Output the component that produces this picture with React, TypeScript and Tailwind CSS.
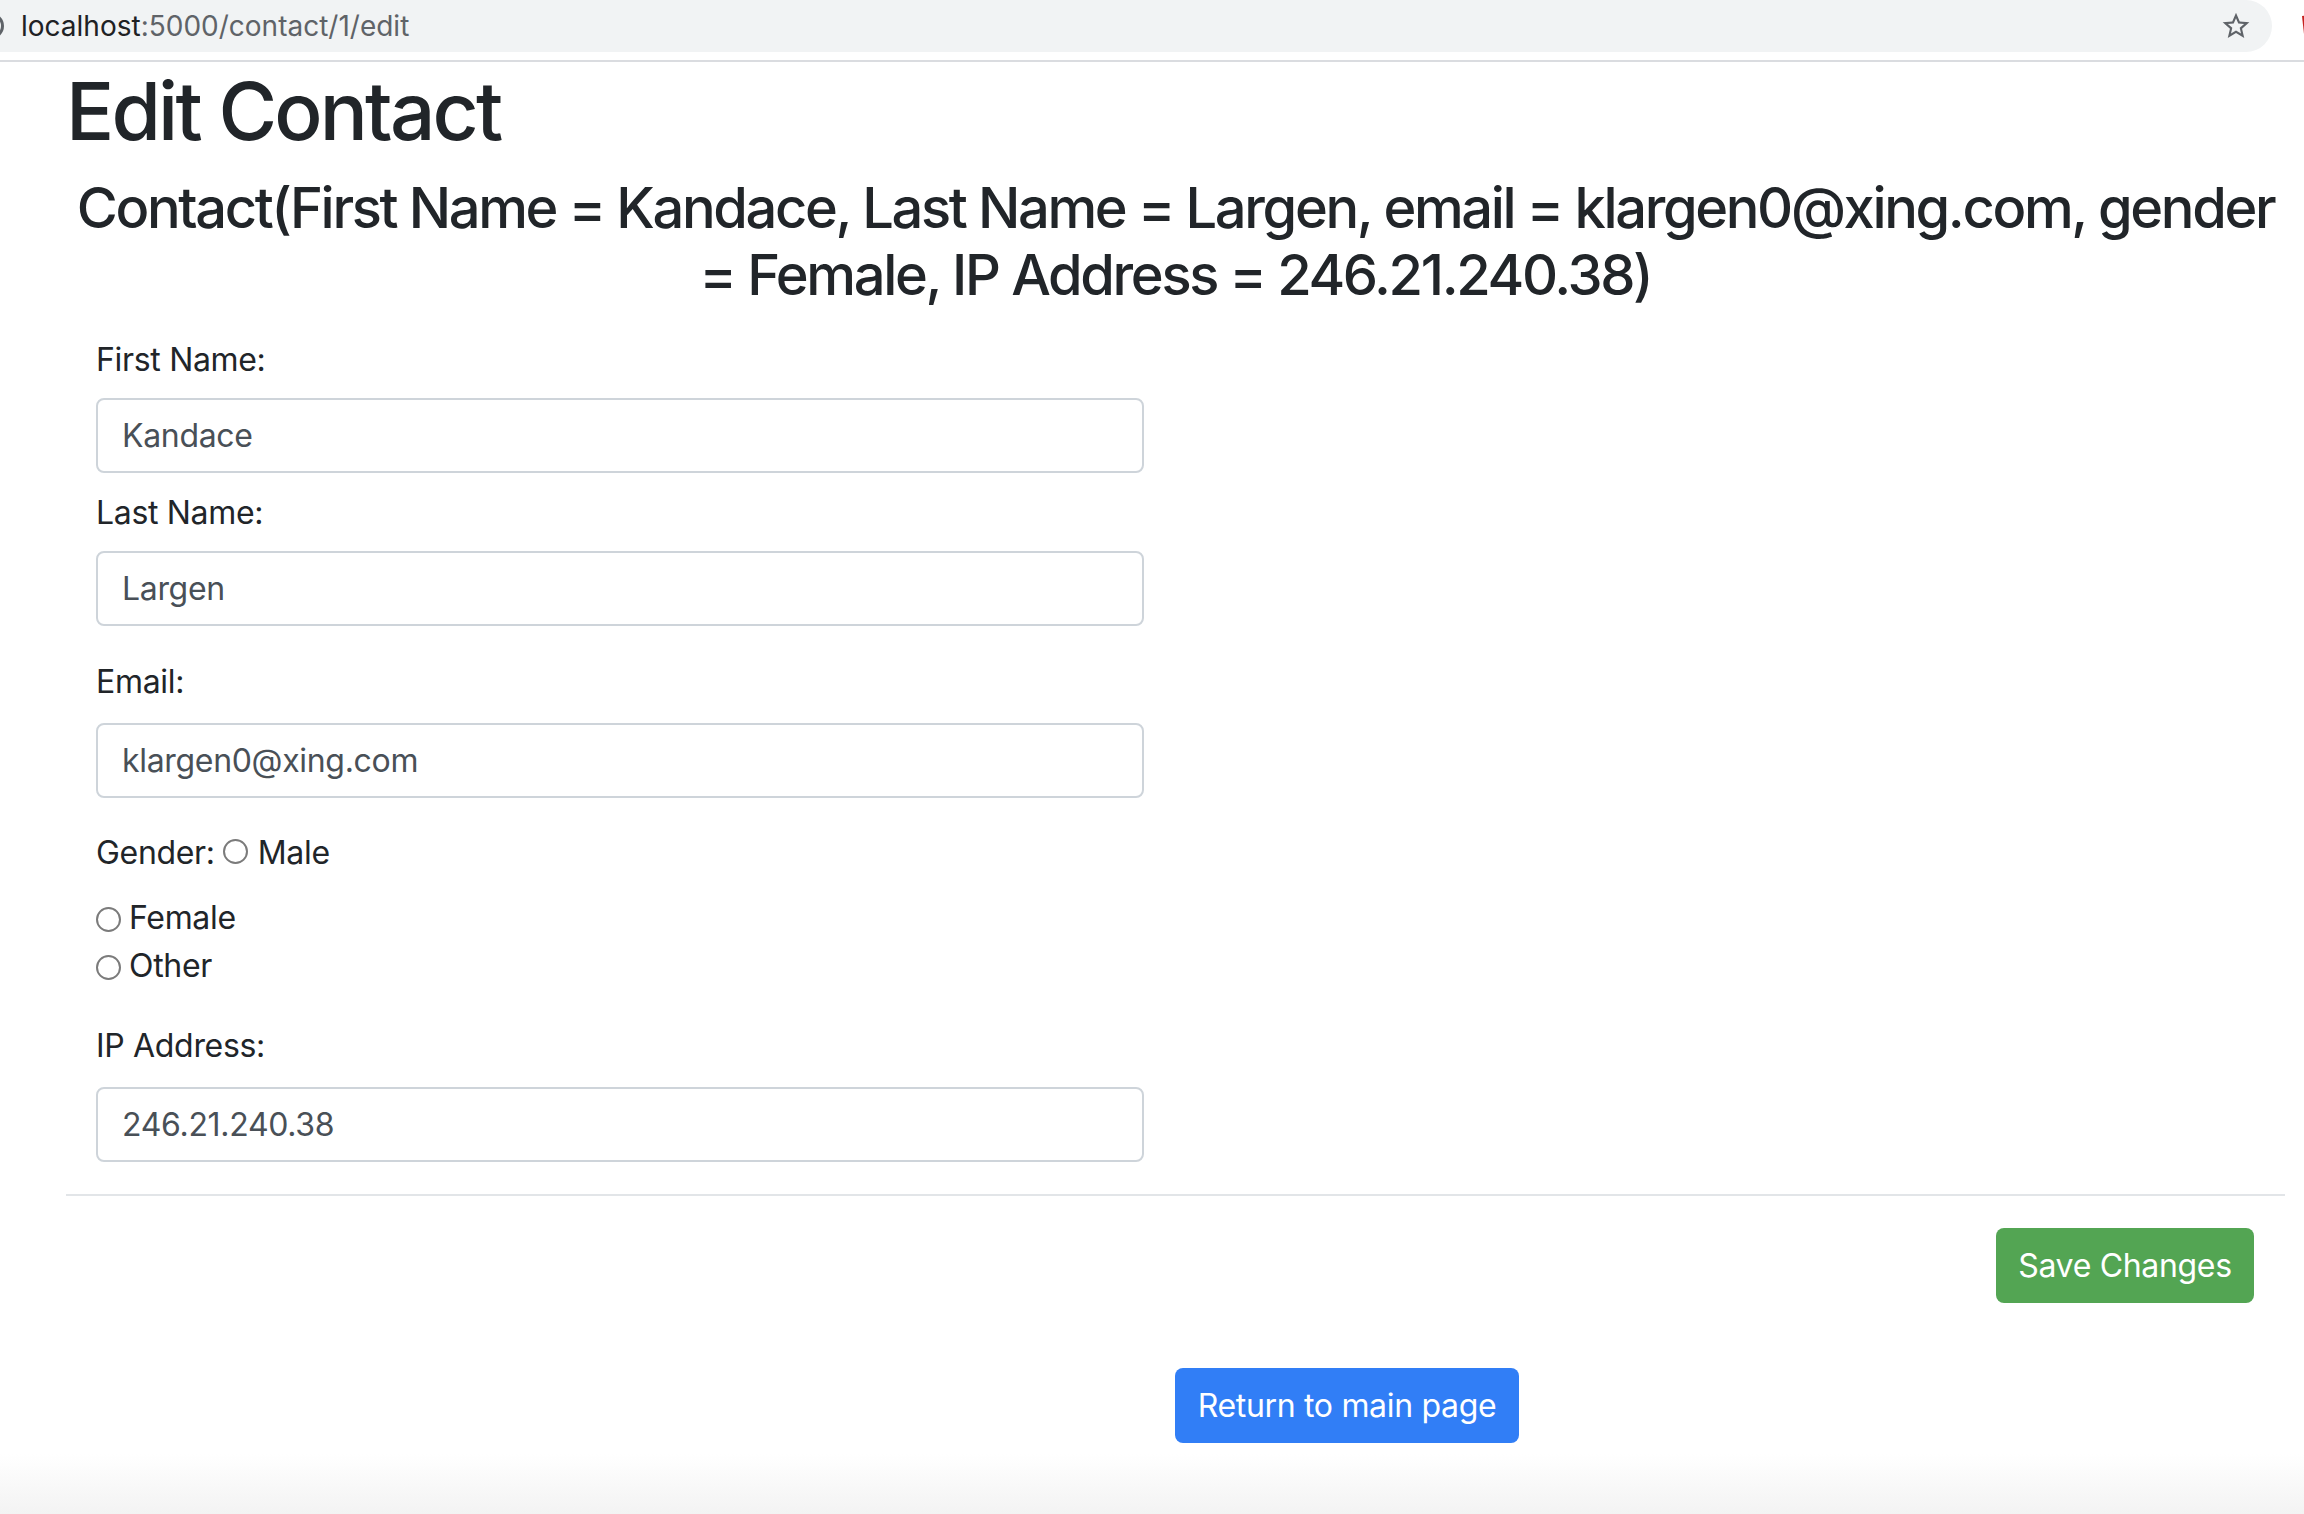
import { useState } from "react"

const font = { fontFamily: "Inter, 'Liberation Sans', sans-serif" }

function Radio() {
  return <span className="inline-block w-[25px] h-[25px] rounded-full border-2 border-[#7b7b7b] bg-white shrink-0" />
}

function Field({ label, value, labelClass, inputClass }: { label: string; value: string; labelClass: string; inputClass: string }) {
  return (
    <>
      <div className={`text-[32px] leading-[48px] text-[#212529] ${labelClass}`}>{label}</div>
      <div
        className={`w-[1048px] h-[75px] border-2 border-[#ced4da] rounded-[8px] px-[24px] flex items-center text-[32px] text-[#495057] ${inputClass}`}
      >
        {value}
      </div>
    </>
  )
}

export default function App() {
  const [gender] = useState("")

  return (
    <div className="min-h-screen bg-white relative overflow-hidden tracking-[-0.02em]" style={font}>
      {/* browser chrome */}
      <div className="flex h-[52px]">
        <div className="flex-1 bg-[#f1f3f4] rounded-r-[26px] flex items-center relative overflow-hidden">
          <span className="absolute left-[-22px] top-[13px] w-[26px] h-[26px] rounded-full border-[3px] border-[#5f6368]" />
          <span className="ml-[21px] text-[28px] text-[#202124] tracking-normal">
            localhost<span className="text-[#5f6368]">:5000/contact/1/edit</span>
          </span>
          <svg className="ml-auto mr-[20px]" width="32" height="32" viewBox="0 0 24 24" fill="#5f6368">
            <path d="M22 9.24l-7.19-.62L12 2 9.19 8.63 2 9.24l5.46 4.73L5.82 21 12 17.27 18.18 21l-1.63-7.03L22 9.24zM12 15.4l-3.76 2.27 1-4.28-3.32-2.88 4.38-.38L12 6.1l1.71 4.04 4.38.38-3.32 2.88 1 4.28L12 15.4z" />
          </svg>
        </div>
        <div className="w-[32px] relative overflow-hidden">
          <svg className="absolute left-[26px] top-[12px]" width="24" height="24" viewBox="0 0 24 24">
            <path d="M4 4 L20 2 L22 20 L6 22 Z" fill="#c5221f" />
          </svg>
        </div>
      </div>
      <div className="h-[8px]" />
      <div className="h-[2px] bg-[#dadce0]" />

      <div className="pl-[66px] pr-[19px]">
        <h1 className="mt-[1px] text-[80px] leading-[96px] text-[#212529] font-medium tracking-[-0.035em]">Edit Contact</h1>
        <h3 className="mt-[16px] text-[56px] leading-[67px] text-center text-[#212529] font-medium tracking-[-0.042em]">
          Contact(First Name = Kandace, Last Name = Largen, email = klargen0@xing.com, gender
          <br />= Female, IP Address = 246.21.240.38)
        </h3>

        <form className="pl-[30px] mt-[27px]">
          <Field label="First Name:" value="Kandace" labelClass="" inputClass="mt-[14px]" />
          <Field label="Last Name:" value="Largen" labelClass="mt-[16px]" inputClass="mt-[14px]" />
          <Field label="Email:" value="klargen0@xing.com" labelClass="mt-[32px]" inputClass="mt-[17px]" />

          <div className="mt-[31px] flex items-center h-[48px] text-[32px] text-[#212529]">
            <span>Gender:</span>
            <span className="ml-[8px] mt-[-4px] flex">
              <Radio />
            </span>
            <span className="ml-[10px]">Male</span>
          </div>
          <div className="mt-[17px] flex items-center h-[48px] text-[32px] text-[#212529]">
            <span className="mt-[2px] flex">
              <Radio />
            </span>
            <span className="ml-[8px]">Female</span>
          </div>
          <div className="flex items-center h-[48px] text-[32px] text-[#212529]">
            <span className="mt-[2px] flex">
              <Radio />
            </span>
            <span className="ml-[8px]">Other</span>
          </div>
          {gender}

          <Field label="IP Address:" value="246.21.240.38" labelClass="mt-[32px]" inputClass="mt-[17px]" />
        </form>

        <div className="mt-[32px] h-[2px] bg-[#e2e5e8]" />

        <div className="mt-[32px] flex justify-end pr-[31px]">
          <button className="w-[258px] h-[75px] rounded-[8px] bg-[#53a553] text-white text-[32px]">Save Changes</button>
        </div>

        <div className="mt-[65px] ml-[1109px]">
          <button className="w-[344px] h-[75px] rounded-[8px] bg-[#317ef6] text-white text-[32px]">Return to main page</button>
        </div>
      </div>

      <div className="absolute left-0 right-0 bottom-0 h-[60px] bg-gradient-to-b from-white/0 to-[#f3f3f3]" />
    </div>
  )
}
